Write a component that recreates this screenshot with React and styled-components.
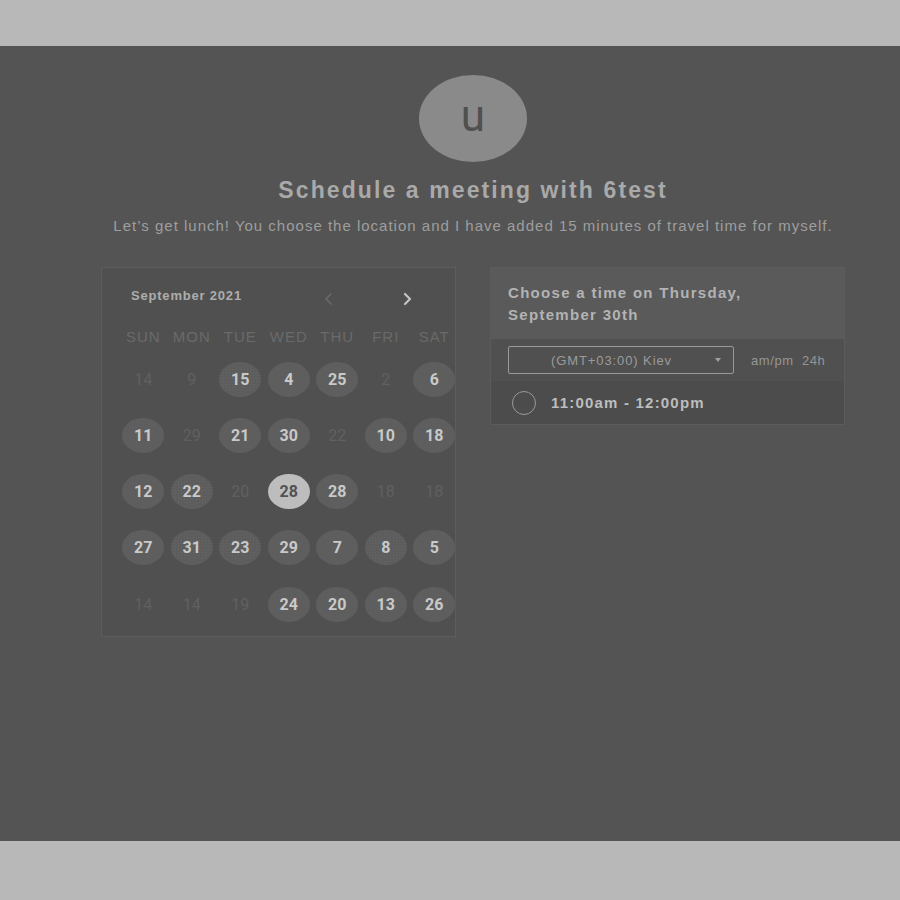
import styled, { createGlobalStyle, css } from 'styled-components'

const GlobalStyle = createGlobalStyle`
  html, body {
    margin: 0;
    padding: 0;
    background: #b8b8b8;
    font-family: "Liberation Sans", Arial, sans-serif;
  }
`

const TopBand = styled.div`
  height: 46px;
  background: #b8b8b8;
`

const Stage = styled.main`
  height: 795px;
  background: #545454;
  overflow: hidden;
`

const Content = styled.div`
  width: 744px;
  margin-left: 101px;
  display: flex;
  flex-direction: column;
  align-items: center;
`

const Avatar = styled.div`
  width: 108px;
  height: 87px;
  margin-top: 29px;
  border-radius: 50%;
  background: #8a8a8a;
  color: #505050;
  font-family: Roboto, sans-serif;
  font-size: 44px;
  display: flex;
  align-items: center;
  justify-content: center;
  line-height: 1;
  padding-bottom: 6px;
  box-sizing: border-box;
`

const Title = styled.h1`
  margin: 15px 0 0;
  font-size: 23px;
  font-weight: 700;
  color: #a9a9a9;
  letter-spacing: 2.1px;
`

const Subtitle = styled.p`
  margin: 13px 0 0;
  font-size: 15px;
  color: #9e9e9e;
  letter-spacing: 1px;
  white-space: nowrap;
`

const Panels = styled.div`
  align-self: stretch;
  margin-top: 33px;
  display: flex;
  gap: 34px;
  align-items: flex-start;
`

const CalendarCard = styled.section`
  width: 355px;
  height: 370px;
  box-sizing: border-box;
  background: #505050;
  border: 1px solid #5d5d5d;
`

const CalHeader = styled.div`
  display: flex;
  align-items: center;
  height: 55px;
  padding: 0 0 0 29px;
`

const Month = styled.span`
  font-size: 13px;
  font-weight: 700;
  color: #adadad;
  letter-spacing: 0.8px;
  width: 187px;
`

const Chevron = styled.span`
  width: 20px;
  display: flex;
  justify-content: center;
  margin-top: 6px;
  ${p => p.$next && css`margin-left: 59px;`}
`

const Grid = styled.div`
  display: grid;
  grid-template-columns: repeat(7, 48.5px);
  margin-left: 17px;
`

const DayName = styled.div`
  height: 26px;
  display: flex;
  align-items: center;
  justify-content: center;
  font-size: 15px;
  letter-spacing: 1px;
  color: #6a6a6a;
  margin-bottom: 2px;
`

const Cell = styled.div`
  height: 56.25px;
  display: flex;
  align-items: center;
  justify-content: center;
`

const Day = styled.div`
  width: 42px;
  height: 35px;
  border-radius: 50%;
  display: flex;
  align-items: center;
  justify-content: center;
  font-family: Roboto, sans-serif;
  font-size: 16px;
  font-weight: 700;
  color: #c9c9c9;
  background: #5e5e5e;
  ${p => p.$kind === 'faded' && css`
    background: transparent;
    color: #606060;
    font-weight: 400;
  `}
  ${p => p.$kind === 'dotted' && css`
    background-color: #5d5d5d;
    background-image: radial-gradient(#666 0.8px, transparent 1px);
    background-size: 3px 3px;
  `}
  ${p => p.$kind === 'selected' && css`
    background: #bdbdbd;
    color: #525252;
  `}
`

const TimeCard = styled.section`
  width: 355px;
  box-sizing: border-box;
  border: 1px solid #5b5b5b;
  background: #4f4f4f;
`

const TimeHeader = styled.div`
  height: 71px;
  box-sizing: border-box;
  padding: 14px 17px 0;
  background: #5a5a5a;
  font-size: 15px;
  font-weight: 700;
  line-height: 22px;
  letter-spacing: 1.3px;
  color: #b3b3b3;
`

const ZoneRow = styled.div`
  height: 42px;
  display: flex;
  align-items: center;
  padding: 0 17px;
  background: #505050;
`

const ZoneSelect = styled.div`
  width: 226px;
  height: 28px;
  box-sizing: border-box;
  border: 1px solid #999;
  border-radius: 2px;
  display: flex;
  align-items: center;
  padding: 0 12px 0 42px;
  font-size: 13px;
  letter-spacing: 0.9px;
  color: #9b9b9b;
`

const ZoneLabel = styled.span`
  flex: 1;
`

const Caret = styled.span`
  width: 0;
  height: 0;
  border-left: 3.5px solid transparent;
  border-right: 3.5px solid transparent;
  border-top: 4px solid #a0a0a0;
`

const Format = styled.span`
  margin-left: 17px;
  font-size: 13px;
  letter-spacing: 0.6px;
  color: #969696;
  word-spacing: 4px;
`

const Slot = styled.div`
  height: 43px;
  display: flex;
  align-items: center;
  padding: 0 0 0 21px;
  background: #4c4c4c;
  font-size: 15px;
  font-weight: 700;
  letter-spacing: 1.2px;
  color: #bdbdbd;
`

const Radio = styled.span`
  width: 22px;
  height: 22px;
  border: 1.5px solid #9a9a9a;
  border-radius: 50%;
  margin-right: 15px;
`

const dayNames = ['SUN', 'MON', 'TUE', 'WED', 'THU', 'FRI', 'SAT']

const weeks = [
  [['14', 'faded'], ['9', 'faded'], ['15', 'dotted'], ['4'], ['25'], ['2', 'faded'], ['6']],
  [['11'], ['29', 'faded'], ['21'], ['30'], ['22', 'faded'], ['10'], ['18']],
  [['12'], ['22', 'dotted'], ['20', 'faded'], ['28', 'selected'], ['28'], ['18', 'faded'], ['18', 'faded']],
  [['27'], ['31', 'dotted'], ['23', 'dotted'], ['29'], ['7'], ['8', 'dotted'], ['5']],
  [['14', 'faded'], ['14', 'faded'], ['19', 'faded'], ['24'], ['20'], ['13'], ['26']],
]

function ChevronIcon({ dir, color, width }) {
  const d = dir === 'left' ? 'M8 2 L3 7 L8 12' : 'M3 2 L8 7 L3 12'
  return (
    <svg width="11" height="14" viewBox="0 0 11 14">
      <path d={d} fill="none" stroke={color} strokeWidth={width} strokeLinecap="round" strokeLinejoin="round" />
    </svg>
  )
}

export default function App() {
  return (
    <>
      <GlobalStyle />
      <TopBand />
      <Stage>
        <Content>
          <Avatar>u</Avatar>
          <Title>Schedule a meeting with 6test</Title>
          <Subtitle>Let’s get lunch! You choose the location and I have added 15 minutes of travel time for myself.</Subtitle>
          <Panels>
            <CalendarCard>
              <CalHeader>
                <Month>September 2021</Month>
                <Chevron><ChevronIcon dir="left" color="#6a6a6a" width={1.6} /></Chevron>
                <Chevron $next><ChevronIcon dir="right" color="#c4c4c4" width={2.2} /></Chevron>
              </CalHeader>
              <Grid>
                {dayNames.map(n => <DayName key={n}>{n}</DayName>)}
                {weeks.flat().map(([num, kind], i) => (
                  <Cell key={i}>
                    <Day $kind={kind}>{num}</Day>
                  </Cell>
                ))}
              </Grid>
            </CalendarCard>
            <TimeCard>
              <TimeHeader>
                Choose a time on Thursday,<br />September 30th
              </TimeHeader>
              <ZoneRow>
                <ZoneSelect>
                  <ZoneLabel>(GMT+03:00) Kiev</ZoneLabel>
                  <Caret />
                </ZoneSelect>
                <Format>am/pm 24h</Format>
              </ZoneRow>
              <Slot>
                <Radio />
                11:00am - 12:00pm
              </Slot>
            </TimeCard>
          </Panels>
        </Content>
      </Stage>
    </>
  )
}
